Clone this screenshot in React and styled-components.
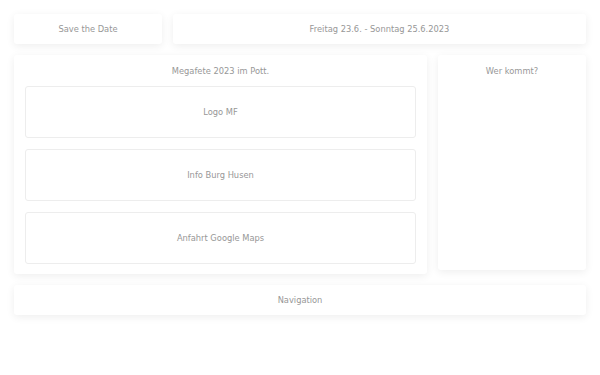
import styled, { createGlobalStyle } from "styled-components"

const GlobalStyle = createGlobalStyle`
    html, body {
        margin: 0;
        background: #fff;
        font-family: "DejaVu Sans", Verdana, sans-serif;
    }
`

const Page = styled.div`
    display: grid;
    grid-template-columns: 148px 254px 148px;
    column-gap: 11px;
    row-gap: 11px;
    padding: 14px;
    align-items: start;
`

const Card = styled.div`
    grid-column: ${props => props.$span};
    background: #fff;
    border-radius: 3px;
    box-shadow: 0 2px 8px rgba(0, 0, 0, 0.07);
    color: #979797;
    font-size: 8.3px;
    height: ${props => props.$height || 'auto'};
    box-sizing: border-box;
`

const Bar = styled(Card)`
    display: flex;
    align-items: center;
    justify-content: center;
    height: 30px;
`

const Panel = styled(Card)`
    display: flex;
    flex-direction: column;
    align-items: stretch;
    padding: 11px 11px 10px;
    gap: 11px;
`

const Title = styled.div`
    text-align: center;
    line-height: 10px;
    margin-bottom: -1px;
`

const Box = styled.div`
    height: 52px;
    border: 1px solid #ededed;
    border-radius: 3px;
    display: flex;
    align-items: center;
    justify-content: center;
    box-sizing: border-box;
`

const App = () => {
    return (
        <>
            <GlobalStyle />
            <Page>
                <Bar $span="1 / 2">Save the Date</Bar>
                <Bar $span="2 / 4">Freitag 23.6. - Sonntag 25.6.2023</Bar>
                <Panel $span="1 / 3">
                    <Title>Megafete 2023 im Pott.</Title>
                    <Box>Logo MF</Box>
                    <Box>Info Burg Husen</Box>
                    <Box>Anfahrt Google Maps</Box>
                </Panel>
                <Panel $span="3 / 4" $height="215px">
                    <Title>Wer kommt?</Title>
                </Panel>
                <Bar $span="1 / 4">Navigation</Bar>
            </Page>
        </>
    )
}

export default App
